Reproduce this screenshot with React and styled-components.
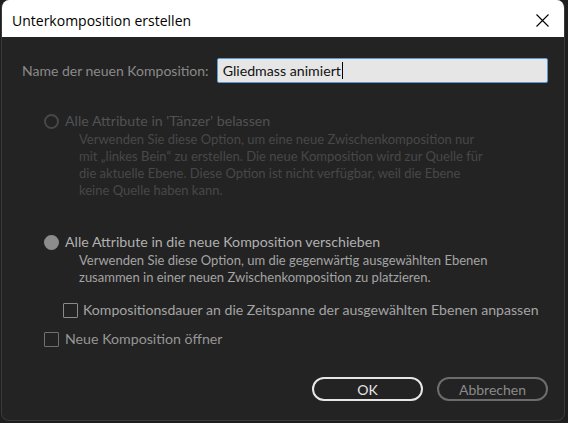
import React from "react";
import styled, { createGlobalStyle } from "styled-components";

const GlobalStyle = createGlobalStyle`
  body {
    margin: 0;
    background: #1e1e1e;
    font-family: Lato, "Liberation Sans", sans-serif;
  }
`;

const Page = styled.div`
  width: 568px;
  height: 423px;
  padding-left: 1px;
  box-sizing: border-box;
`;

const Dialog = styled.div`
  width: 564px;
  height: 421px;
  box-sizing: border-box;
  display: flex;
  flex-direction: column;
  background: #232323;
  border: 1px solid #3a3a3a;
  border-top: none;
  border-radius: 8px;
  overflow: hidden;
`;

const TitleBar = styled.div`
  height: 37px;
  flex-shrink: 0;
  background: #ffffff;
  display: flex;
  align-items: center;
  justify-content: space-between;
  padding: 3px 0 0 10px;
  box-sizing: border-box;
`;

const Title = styled.span`
  font-family: "Open Sans", "Noto Sans", sans-serif;
  font-size: 14px;
  color: #000;
`;

const CloseButton = styled.div`
  width: 44px;
  height: 100%;
  display: flex;
  align-items: center;
  justify-content: center;
`;

const Body = styled.div`
  flex: 1;
  display: flex;
  flex-direction: column;
  padding: 21px 16px 0 20px;
`;

const NameRow = styled.div`
  display: flex;
  align-items: center;
  gap: 8px;
`;

const FieldLabel = styled.span`
  font-size: 14px;
  color: #8a8a8a;
  white-space: nowrap;
`;

const Field = styled.div`
  width: 331px;
  height: 25px;
  box-sizing: border-box;
  background: #e6e6e6;
  border: 1px solid #5a9ad8;
  border-radius: 2px;
  display: flex;
  align-items: center;
  padding-left: 5px;
  font-size: 14.2px;
  color: #111;
`;

const Caret = styled.span`
  display: inline-block;
  width: 1px;
  height: 17px;
  background: #000;
  margin-left: 1px;
`;

const OptionRow = styled.div`
  display: flex;
  align-items: center;
  gap: ${p => p.$gap || 6}px;
  height: 18px;
  margin-top: ${p => p.$top}px;
  padding-left: ${p => p.$indent}px;
`;

const Radio = styled.span`
  width: 15px;
  height: 15px;
  box-sizing: border-box;
  border-radius: 50%;
  flex-shrink: 0;
  border: 2px solid ${p => (p.$checked ? "#8c8c8c" : "#484848")};
  background: ${p => (p.$checked ? "#8c8c8c" : "transparent")};
`;

const Checkbox = styled.span`
  width: 15px;
  height: 15px;
  box-sizing: border-box;
  flex-shrink: 0;
  border: 1.5px solid ${p => p.$color};
  border-radius: 1px;
`;

const OptionLabel = styled.span`
  font-size: ${p => p.$size || 14.2}px;
  line-height: 18px;
  white-space: nowrap;
  color: ${p => p.$color};
`;

const Description = styled.p`
  margin: 1px 0 0 57px;
  font-size: 13px;
  line-height: 17px;
  color: ${p => p.$color};
  white-space: pre-line;
`;

const Buttons = styled.div`
  display: flex;
  justify-content: flex-end;
  gap: 14px;
  margin-top: 29px;
`;

const Button = styled.button`
  width: 111px;
  height: 24px;
  box-sizing: border-box;
  background: transparent;
  border: 2px solid ${p => (p.$primary ? "#e6e6e6" : "#6c6c6c")};
  border-radius: 12px;
  color: ${p => (p.$primary ? "#e6e6e6" : "#8a8a8a")};
  font-family: Lato, sans-serif;
  font-size: 14px;
  padding: 0;
`;

export default function App() {
  return (
    <Page>
      <GlobalStyle />
      <Dialog>
        <TitleBar>
          <Title>Unterkomposition erstellen</Title>
          <CloseButton>
            <svg width="13" height="13" viewBox="0 0 13 13">
              <path d="M0.5 0.5 L12.5 12.5 M12.5 0.5 L0.5 12.5" stroke="#000" strokeWidth="1.1" fill="none" />
            </svg>
          </CloseButton>
        </TitleBar>
        <Body>
          <NameRow>
            <FieldLabel>Name der neuen Komposition:</FieldLabel>
            <Field>
              Gliedmass animiert<Caret />
            </Field>
          </NameRow>

          <OptionRow $top={29} $indent={22}>
            <Radio />
            <OptionLabel $color="#525252">Alle Attribute in 'Tänzer' belassen</OptionLabel>
          </OptionRow>
          <Description $color="#484848">
            {"Verwenden Sie diese Option, um eine neue Zwischenkomposition nur\nmit „linkes Bein“ zu erstellen. Die neue Komposition wird zur Quelle für\ndie aktuelle Ebene. Diese Option ist nicht verfügbar, weil die Ebene\nkeine Quelle haben kann."}
          </Description>

          <OptionRow $top={34} $indent={22}>
            <Radio $checked />
            <OptionLabel $color="#b0b0b0">Alle Attribute in die neue Komposition verschieben</OptionLabel>
          </OptionRow>
          <Description $color="#a4a4a4">
            {"Verwenden Sie diese Option, um die gegenwärtig ausgewählten Ebenen\nzusammen in einer neuen Zwischenkomposition zu platzieren."}
          </Description>

          <OptionRow $top={15} $indent={41} $gap={5}>
            <Checkbox $color="#8a8a8a" />
            <OptionLabel $size={14.1} $color="#a4a4a4">Kompositionsdauer an die Zeitspanne der ausgewählten Ebenen anpassen</OptionLabel>
          </OptionRow>

          <OptionRow $top={11} $indent={22}>
            <Checkbox $color="#707070" />
            <OptionLabel $color="#969696">Neue Komposition öffner</OptionLabel>
          </OptionRow>

          <Buttons>
            <Button $primary>OK</Button>
            <Button>Abbrechen</Button>
          </Buttons>
        </Body>
      </Dialog>
    </Page>
  );
}
